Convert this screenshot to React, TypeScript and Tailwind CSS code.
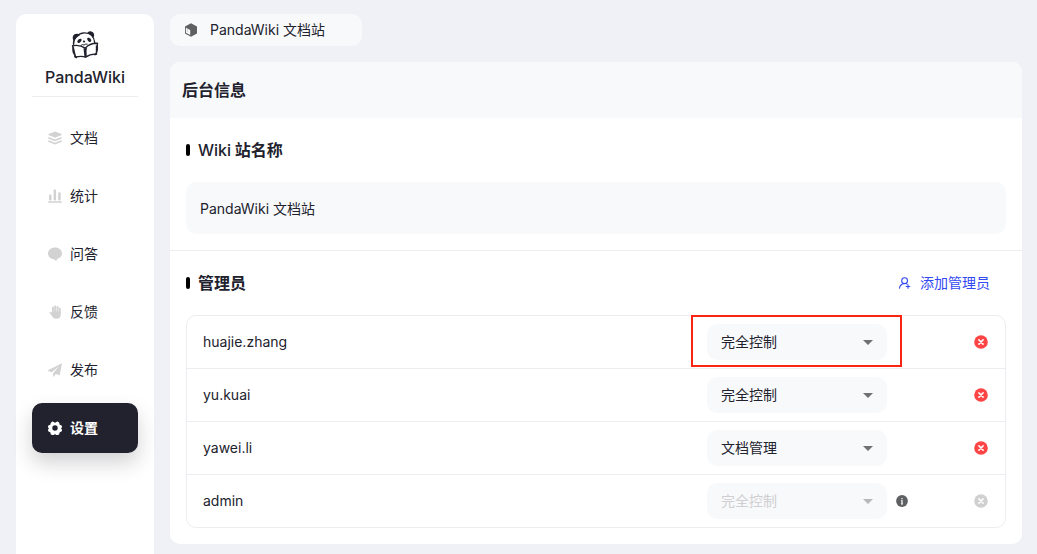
import { useState } from 'react'
import type { ReactNode } from 'react'

interface Admin {
  name: string
  role: string
  locked?: boolean
  highlighted?: boolean
}

const ROLES = ['完全控制', '文档管理', '数据运营']

const ADMINS: Admin[] = [
  { name: 'huajie.zhang', role: '完全控制', highlighted: true },
  { name: 'yu.kuai', role: '完全控制' },
  { name: 'yawei.li', role: '文档管理' },
  { name: 'admin', role: '完全控制', locked: true },
]

const NAV: { label: string; icon: ReactNode }[] = [
  {
    label: '文档',
    icon: (
      <>
        <path d="M7 .4 13.500 3.100Q14 3.500 13.500 3.900L7 6.700.5 3.900Q0 3.500.5 3.100Z" />
        <path d="M.8 5.900 7 8.400l6.200-2.500q1.400.9 0 1.800L7 10.200.8 7.700Q-.6 6.800.8 5.900Z" />
        <path d="M.8 9.300 7 11.800l6.200-2.500q1.400.9 0 1.800L7 13.600.8 11.100Q-.6 10.200.8 9.300Z" />
      </>
    ),
  },
  {
    label: '统计',
    icon: (
      <>
        <rect x="1" y="5.500" width="2.500" height="6" rx="1" />
        <rect x="5.600" y=".5" width="2.500" height="11" rx="1" />
        <rect x="10.200" y="3.200" width="2.500" height="8.300" rx="1" />
        <rect x="0" y="12.300" width="14" height="1.400" rx=".7" />
      </>
    ),
  },
  {
    label: '问答',
    icon: <path d="M7 .4c3.900 0 7 2.600 7 6 0 2.700-2.200 5-5 5.700L8.700 13.500q-.2.5-.7.2L5.700 12.300C2.500 11.900 0 9.500 0 6.400c0-3.400 3.100-6 7-6Z" />,
  },
  {
    label: '反馈',
    icon: (
      <>
        <rect x="4" y="1.600" width="1.900" height="8" rx=".9" />
        <rect x="6.300" y=".4" width="1.900" height="9" rx=".9" />
        <rect x="8.600" y=".9" width="1.900" height="9" rx=".9" />
        <rect x="10.900" y="2.700" width="1.800" height="7" rx=".9" />
        <path d="M4 6.500h8.700v3.300c0 2.500-1.600 4-4.300 4-2.100 0-3.300-.8-4.100-2.200L1.700 8q-.4-.9.5-1.200.8-.2 1.800 1.200Z" />
      </>
    ),
  },
  {
    label: '发布',
    icon: <path d="M14 .2 11.800 11.700q-.2.700-.9.400L7.900 10.900l-2.100 2.700q-.6.400-.7-.4v-2.900L11.200 3 3.700 9.200.4 7.900q-.7-.4 0-.9Z" />,
  },
  {
    label: '设置',
    icon: (
      <path
        fillRule="evenodd"
        d="M4.300.6Q5 .3 5.600.9 7 2.300 8.400.9 9 .3 9.700.6l1.300.8q.5.400.4 1.200-.1 1.500 1.600 1.700.8.2.9.9l.1.900q0 .6-.6 1-.7.5.1 1 .5.400.5 1l-.2.800q-.2.700-.9.800-1.700.2-1.500 1.800 0 .8-.6 1.100l-1.200.6q-.6.200-1.200-.3-1.400-1.300-2.800 0-.6.500-1.200.300l-1.300-.7q-.5-.4-.5-1.100.1-1.500-1.600-1.700Q.2 10.500.1 9.800L0 9q0-.7.5-1 .8-.6 0-1.100Q0 6.600 0 5.900l.1-.8q.2-.7.9-.8 1.700-.2 1.600-1.700 0-.8.5-1.200ZM7 4.300a2.700 2.700 0 1 0 0 5.400 2.700 2.700 0 0 0 0-5.400Z"
      />
    ),
  },
]

function PandaLogo() {
  return (
    <svg viewBox="0 0 30 30" className="size-[30px]" aria-hidden="true">
      <g fill="#21222d">
        <path d="M3.400 10.500C2.200 8.200 2.500 5.500 4.500 4.300 6.600 3.200 9 3.900 9.800 5.400 7.200 6.500 5.200 8.500 4.200 10.900Z" />
        <path d="M17.200 3.200c.6-1.500 2.300-2.300 4.100-1.800 2.500.6 3.500 3 2.500 5.600l-.9.900C21.700 5.500 19.700 4.100 17.200 3.200Z" />
        <path d="M7.500 10.800c.9-1.700 2.800-2.600 3.800-1.700.8.900-.1 2.900-1.600 3.600-1.700.7-2.900-.3-2.200-1.900Z" />
        <path d="M17.500 7.900c1.100-.6 2.900.1 3.500 1.500.7 1.600-.1 2.800-1.400 2.500-1.700-.4-3-3.300-2.100-4Z" />
        <ellipse cx="14" cy="11.500" rx="1.200" ry=".9" />
        <path d="M13.500 18.200h3.700l-.7 2.400.3 6.100-2.300.9Z" />
        <path d="M2.500 17.500 4 17l.9 9.300 2.400.4-.3 1.500C5 28.500 3.600 27 4 25 2.300 23 2 20 2.500 17.500ZM25.800 15.500h1.900c.8 2.500.4 5-.8 7 .2 1.900-.7 2.800-2.400 2.900L24.200 24l1.600-1Z" />
      </g>
      <g fill="none" stroke="#21222d" strokeWidth="1.400" strokeLinejoin="round" strokeLinecap="round">
        <path d="M3.500 14.200C3.400 8 8.200 3.200 14.200 2.900c6-.2 9.900 3.700 10.600 9.900" />
        <path d="M2.500 15.800c4-.9 8-.8 12.800 2.400 3-3.700 7.500-5 12.200-4.900l-1.100 10.900c-4.200-.3-7.500.6-10.700 3-3.200-1.300-6-1-10.100-.3Z" />
        <path d="M11 15.200q1.500-1.300 3-.1 1.500-1.600 3.200-1" strokeWidth="1" />
      </g>
    </svg>
  )
}

function CircleCross() {
  return (
    <svg viewBox="0 0 14 14" className="size-[14px]" aria-hidden="true">
      <circle cx="7" cy="7" r="6.800" fill="currentColor" />
      <path d="m4.900 4.900 4.200 4.200m0-4.200L4.900 9.100" stroke="#fff" strokeWidth="1.500" strokeLinecap="round" />
    </svg>
  )
}

function RoleSelect({ admin }: { admin: Admin }) {
  const [role, setRole] = useState(admin.role)

  return (
    <div className="relative w-[180px]">
      <select
        aria-label={`${admin.name} 权限`}
        value={role}
        disabled={admin.locked}
        onChange={e => setRole(e.target.value)}
        className="block h-9 w-full appearance-none rounded-[10px] bg-[#f8f9fb] px-[14px] text-sm outline-none disabled:text-[#cfcfd1] disabled:opacity-100"
      >
        {ROLES.map(r => (
          <option key={r}>{r}</option>
        ))}
      </select>
      <svg
        viewBox="0 0 10 5"
        className={`pointer-events-none absolute right-[14px] top-4 h-[5px] w-[10px] ${admin.locked ? 'text-[#b7b8ba]' : 'text-[#707173]'}`}
        aria-hidden="true"
      >
        <path d="M0 0h10L5 5Z" fill="currentColor" />
      </svg>
      {admin.highlighted && (
        <span className="pointer-events-none absolute -bottom-[7px] -left-4 -right-[15px] -top-[9px] border-2 border-[#fb2312]" />
      )}
    </div>
  )
}

function SectionTitle({ children }: { children: ReactNode }) {
  return (
    <h3 className="flex h-8 items-center gap-2 text-base font-bold">
      <span className="h-3 w-1 rounded-xs bg-black" />
      <span>{children}</span>
    </h3>
  )
}

export default function App() {
  const [siteName, setSiteName] = useState('PandaWiki 文档站')

  return (
    <div className="flex min-h-screen gap-4 bg-[#f0f1f7] pl-4 pr-[15px] pt-[14px] font-['Inter','Noto_Sans_CJK_SC',sans-serif] text-sm text-[#21222d]">
      <aside className="w-[138px] shrink-0 rounded-t-[10px] bg-white px-4 pt-4">
        <div className="flex flex-col items-center border-b border-[#ecedf1] pb-[7px]">
          <PandaLogo />
          <div className="mt-[5px] text-base font-medium">PandaWiki</div>
        </div>
        <nav className="mt-4 flex flex-col gap-2">
          {NAV.map(item => {
            const active = item.label === '设置'
            return (
              <a
                key={item.label}
                href="#"
                aria-current={active ? 'page' : undefined}
                className={`flex h-[50px] items-center gap-2 rounded-[10px] px-4 ${active ? 'bg-[#21222d] font-bold text-white shadow-[0_10px_20px_0_rgba(33,34,45,0.2)]' : ''}`}
              >
                <svg
                  viewBox="0 0 14 14"
                  fill="currentColor"
                  className={`size-[14px] ${active ? 'text-white' : 'text-[#d2d2d3]'}`}
                  aria-hidden="true"
                >
                  {item.icon}
                </svg>
                {item.label}
              </a>
            )
          })}
        </nav>
      </aside>

      <main className="min-w-0 flex-1 pb-[10px]">
        <button className="flex h-8 w-48 items-center gap-3 rounded-[10px] bg-[#f8f9fb] px-[14px]">
          <svg viewBox="0 0 14 14" className="size-[14px]" aria-hidden="true">
            <path d="M7 .2 13 3.400v7.200L7 13.800 1 10.600V3.400Z" fill="#5f6062" />
            <path d="m1.900 4.700 4.300 2.200v5L1.900 9.700Z" fill="#f8f9fb" />
            <path d="m2.800 5.900 1.300.7v2.700l-1.300-.7Z" fill="#5f6062" opacity=".25" />
          </svg>
          PandaWiki 文档站
        </button>

        <div className="mt-4 rounded-[10px] bg-white">
          <h2 className="flex h-14 items-center rounded-t-[10px] bg-[#f8f9fb] px-3 text-base font-bold">后台信息</h2>

          <section className="border-b border-[#ecedf1] p-4">
            <SectionTitle>
              <span className="font-medium">Wiki</span> 站名称
            </SectionTitle>
            <input
              aria-label="Wiki 站名称"
              value={siteName}
              onChange={e => setSiteName(e.target.value)}
              className="mt-4 block h-[52px] w-full rounded-[10px] bg-[#f8f9fb] px-[14px] outline-none"
            />
          </section>

          <section className="p-4">
            <div className="flex items-center justify-between">
              <SectionTitle>管理员</SectionTitle>
              <button className="flex h-8 items-center gap-2 px-4 text-[#3248f2]">
                <svg
                  viewBox="0 0 14 14"
                  fill="none"
                  stroke="currentColor"
                  strokeWidth="1.100"
                  strokeLinecap="round"
                  className="size-[14px]"
                  aria-hidden="true"
                >
                  <circle cx="6.600" cy="4.700" r="2.900" />
                  <path d="M1.500 12.300c.3-2.600 1.600-4.200 4-4.700M8 7.500l1 .6M10 8.700v3.600M8.200 10.500h3.600" />
                </svg>
                添加管理员
              </button>
            </div>

            <div className="mt-4 rounded-[10px] border border-[#ecedf1]">
              <table className="w-full table-fixed border-separate border-spacing-0">
                <tbody className="[&>tr:not(:last-child)>td]:border-b [&>tr>td]:border-[#ecedf1]">
                  {ADMINS.map(admin => (
                    <tr key={admin.name}>
                      <td className="p-0 pl-4">{admin.name}</td>
                      <td className="w-[234px] p-0">
                        <div className="flex h-[52px] items-center gap-2">
                          <RoleSelect admin={admin} />
                          {admin.locked && (
                            <svg viewBox="0 0 14 14" className="size-[14px]" aria-hidden="true">
                              <circle cx="7" cy="7" r="5.900" fill="#5f6062" />
                              <path d="M7 3.900v1.300M6.200 6.500H7v3.400M6 10h2" stroke="#fff" strokeWidth="1.200" fill="none" />
                            </svg>
                          )}
                        </div>
                      </td>
                      <td className="w-16 p-0">
                        <button
                          aria-label={`删除 ${admin.name}`}
                          disabled={admin.locked}
                          className="ml-auto mr-[17px] block text-[#fe4545] disabled:text-[#d0d0d1]"
                        >
                          <CircleCross />
                        </button>
                      </td>
                    </tr>
                  ))}
                </tbody>
              </table>
            </div>
          </section>
        </div>
      </main>
    </div>
  )
}
